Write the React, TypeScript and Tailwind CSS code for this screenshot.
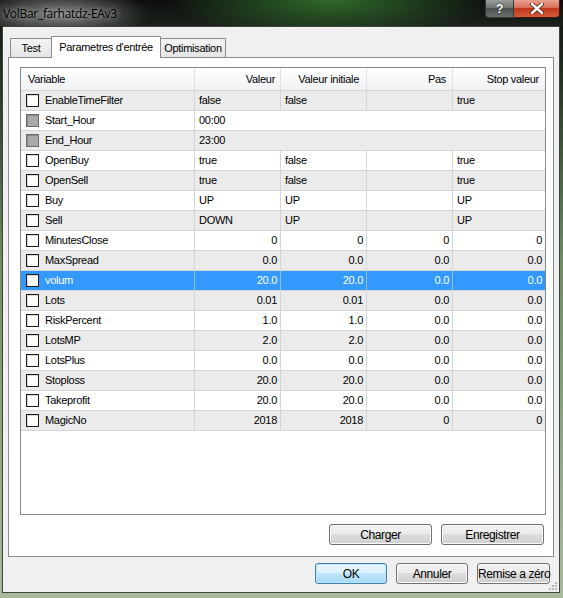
import React from "react";

interface IParam {
  name: string;
  v: string;
  vi: string;
  pas: string;
  stop: string;
  num?: boolean;
  disabled?: boolean;
  selected?: boolean;
}

const rows: IParam[] = [
  { name: "EnableTimeFilter", v: "false", vi: "false", pas: "", stop: "true" },
  { name: "Start_Hour", v: "00:00", vi: "", pas: "", stop: "", disabled: true },
  { name: "End_Hour", v: "23:00", vi: "", pas: "", stop: "", disabled: true },
  { name: "OpenBuy", v: "true", vi: "false", pas: "", stop: "true" },
  { name: "OpenSell", v: "true", vi: "false", pas: "", stop: "true" },
  { name: "Buy", v: "UP", vi: "UP", pas: "", stop: "UP" },
  { name: "Sell", v: "DOWN", vi: "UP", pas: "", stop: "UP" },
  { name: "MinutesClose", v: "0", vi: "0", pas: "0", stop: "0", num: true },
  { name: "MaxSpread", v: "0.0", vi: "0.0", pas: "0.0", stop: "0.0", num: true },
  { name: "volum", v: "20.0", vi: "20.0", pas: "0.0", stop: "0.0", num: true, selected: true },
  { name: "Lots", v: "0.01", vi: "0.01", pas: "0.0", stop: "0.0", num: true },
  { name: "RiskPercent", v: "1.0", vi: "1.0", pas: "0.0", stop: "0.0", num: true },
  { name: "LotsMP", v: "2.0", vi: "2.0", pas: "0.0", stop: "0.0", num: true },
  { name: "LotsPlus", v: "0.0", vi: "0.0", pas: "0.0", stop: "0.0", num: true },
  { name: "Stoploss", v: "20.0", vi: "20.0", pas: "0.0", stop: "0.0", num: true },
  { name: "Takeprofit", v: "20.0", vi: "20.0", pas: "0.0", stop: "0.0", num: true },
  { name: "MagicNo", v: "2018", vi: "2018", pas: "0", stop: "0", num: true },
];

function Checkbox({ disabled }: { disabled?: boolean }) {
  return (
    <span
      className={
        disabled
          ? "w-[13px] h-[13px] shrink-0 border border-[#6d6d6d] bg-[#a9a9a9] shadow-[inset_1px_1px_0_#8a8a8a]"
          : "w-[13px] h-[13px] shrink-0 border border-[#1c1c1c] bg-white shadow-[inset_1px_1px_0_#d8d8d8]"
      }
    />
  );
}

function Button({ label, focused, w }: { label: string; focused?: boolean; w: string }) {
  return (
    <button
      className={
        focused
          ? `${w} h-[21px] whitespace-nowrap rounded-[3px] border border-[#3c7fb1] bg-[linear-gradient(#eaf6fd,#d9f0fc_50%,#bee6fd_50%,#a7d9f5)] shadow-[inset_0_0_0_1px_#c4e5f6] text-[12px] tracking-[-0.4px] text-black`
          : `${w} h-[21px] whitespace-nowrap rounded-[3px] border border-[#707070] bg-[linear-gradient(#f2f2f2,#ebebeb_50%,#dddddd_50%,#cfcfcf)] shadow-[inset_0_0_0_1px_#fbfbfb] text-[12px] tracking-[-0.4px] text-black`
      }
    >
      {label}
    </button>
  );
}

function App() {
  const cols = "grid grid-cols-[174px_86px_86px_86px_92px]";
  return (
    <div className="w-[563px] h-[598px] flex flex-col overflow-hidden bg-[linear-gradient(#101210_0px,#1e2a1d_60px,#6f8a64_260px,#97ab8a_480px,#a9b99d_100%)] font-['Liberation_Sans',Arial,sans-serif] text-[11px] tracking-[-0.3px] text-black">
      {/* title bar */}
      <div className="h-[26px] shrink-0 flex justify-between bg-[radial-gradient(ellipse_160px_40px_at_330px_0px,#2f6b2a,rgba(20,40,20,0)),radial-gradient(ellipse_90px_28px_at_60px_14px,#7a7a7a,rgba(30,30,30,0)),linear-gradient(#0d0f0d,#1b211b)]">
        <span className="pl-[3px] pt-[5px] text-[12px] text-black font-['Open_Sans',sans-serif] tracking-[-0.3px] [text-shadow:0_0_6px_rgba(255,255,255,0.8)]">
          VolBar_farhatdz-EAv3
        </span>
        <div className="flex items-start pr-[3px]">
          <div className="w-[29px] h-[18px] rounded-bl-[4px] border border-t-0 border-[#3a3a3a] bg-[linear-gradient(#9a9d9a,#6e726e_50%,#4e524e_50%,#6a6e6a)] flex items-center justify-center text-white font-bold text-[12px] [text-shadow:0_0_2px_#000]">
            ?
          </div>
          <div className="w-[46px] h-[18px] rounded-br-[4px] border border-t-0 border-l-0 border-[#3a1a14] bg-[linear-gradient(#e8a08f,#d46a52_50%,#c0381c_50%,#d25a3a)] flex items-center justify-center">
            <svg width="14" height="11" viewBox="0 0 14 11">
              <path d="M2 1 L12 10 M12 1 L2 10" stroke="#4a1a10" strokeWidth="4" strokeLinecap="round" />
              <path d="M2 1 L12 10 M12 1 L2 10" stroke="#ffffff" strokeWidth="2.4" strokeLinecap="round" />
            </svg>
          </div>
        </div>
      </div>

      {/* client area */}
      <div className="ml-[2px] w-[558px] h-[567px] border border-[#3e463c] bg-[#f0f0f0] flex flex-col relative">
        <div className="pl-[5px] pt-[8px]">
          {/* tabs */}
          <div className="flex items-end h-[22px] pl-[2px]">
            <div className="w-[42px] h-[19px] border border-b-0 border-[#898c95] bg-[linear-gradient(#f3f3f3,#e5e5e5)] flex items-center justify-center pt-[1px]">
              Test
            </div>
            <div className="w-[110px] h-[22px] -ml-[1px] border border-b-0 border-[#898c95] bg-white flex items-center justify-center relative z-10 translate-y-[1px]">
              Parametres d'entrée
            </div>
            <div className="w-[66px] h-[19px] -ml-[1px] border border-b-0 border-[#898c95] bg-[linear-gradient(#f3f3f3,#e5e5e5)] flex items-center justify-center pt-[1px]">
              Optimisation
            </div>
          </div>

          {/* panel */}
          <div className="w-[546px] h-[500px] border border-[#898c95] bg-white pl-[11px] pt-[9px]">
            <div className="w-[526px] h-[448px] border border-[#828790] flex flex-col bg-white">
              <div className={`${cols} h-[23px] border-b border-[#d5d5d5] bg-[linear-gradient(#ffffff,#f7f8fa_50%,#f1f2f4)]`}>
                <div className="pl-[7px] flex items-center border-r border-[#e2e3e5]">Variable</div>
                <div className="pr-[5px] flex items-center justify-end border-r border-[#e2e3e5]">Valeur</div>
                <div className="pr-[7px] flex items-center justify-end border-r border-[#e2e3e5]">Valeur initiale</div>
                <div className="pr-[6px] flex items-center justify-end border-r border-[#e2e3e5]">Pas</div>
                <div className="pr-[6px] flex items-center justify-end">Stop valeur</div>
              </div>
              {rows.map((r, i) => {
                const bg = r.selected ? "bg-[#3399ff] text-white" : i % 2 === 0 ? "bg-[#ebebeb]" : "bg-white";
                const line = r.selected ? "border-[#8cc0f5]" : "border-[#d5d5d5]";
                const align = r.num ? "justify-end pr-[3px]" : "justify-start pl-[4px]";
                return (
                  <div key={r.name} className={`${cols} h-[20px] border-b border-[#d5d5d5] ${bg}`}>
                    <div className={`flex items-center pl-[5px] gap-[6px] border-r ${line}`}>
                      <Checkbox disabled={r.disabled} />
                      <span>{r.name}</span>
                    </div>
                    {r.disabled ? (
                      <div className="col-span-4 flex items-center pl-[4px]">{r.v}</div>
                    ) : (
                      <>
                        <div className={`flex items-center ${align} border-r ${line}`}>{r.v}</div>
                        <div className={`flex items-center ${align} border-r ${line}`}>{r.vi}</div>
                        <div className={`flex items-center ${align} border-r ${line}`}>{r.pas}</div>
                        <div className={`flex items-center ${align}`}>{r.stop}</div>
                      </>
                    )}
                  </div>
                );
              })}
            </div>
            <div className="w-[526px] flex justify-end gap-[9px] pr-[2px] mt-[9px]">
              <Button label="Charger" w="w-[103px]" />
              <Button label="Enregistrer" w="w-[103px]" />
            </div>
          </div>
        </div>

        {/* dialog buttons */}
        <div className="flex justify-end gap-[9px] pr-[9px] mt-[6px]">
          <Button label="OK" focused w="w-[72px]" />
          <Button label="Annuler" w="w-[72px]" />
          <Button label="Remise a zéro" w="w-[73px]" />
        </div>

        {/* size grip */}
        <div className="absolute right-[2px] bottom-[2px] grid grid-cols-3 gap-[1px]">
          <span className="w-[2px] h-[2px]" />
          <span className="w-[2px] h-[2px]" />
          <span className="w-[2px] h-[2px] bg-[#b8b8b8]" />
          <span className="w-[2px] h-[2px]" />
          <span className="w-[2px] h-[2px] bg-[#b8b8b8]" />
          <span className="w-[2px] h-[2px] bg-[#b8b8b8]" />
          <span className="w-[2px] h-[2px] bg-[#b8b8b8]" />
          <span className="w-[2px] h-[2px] bg-[#b8b8b8]" />
          <span className="w-[2px] h-[2px] bg-[#b8b8b8]" />
        </div>
      </div>
    </div>
  );
}

export default App;
